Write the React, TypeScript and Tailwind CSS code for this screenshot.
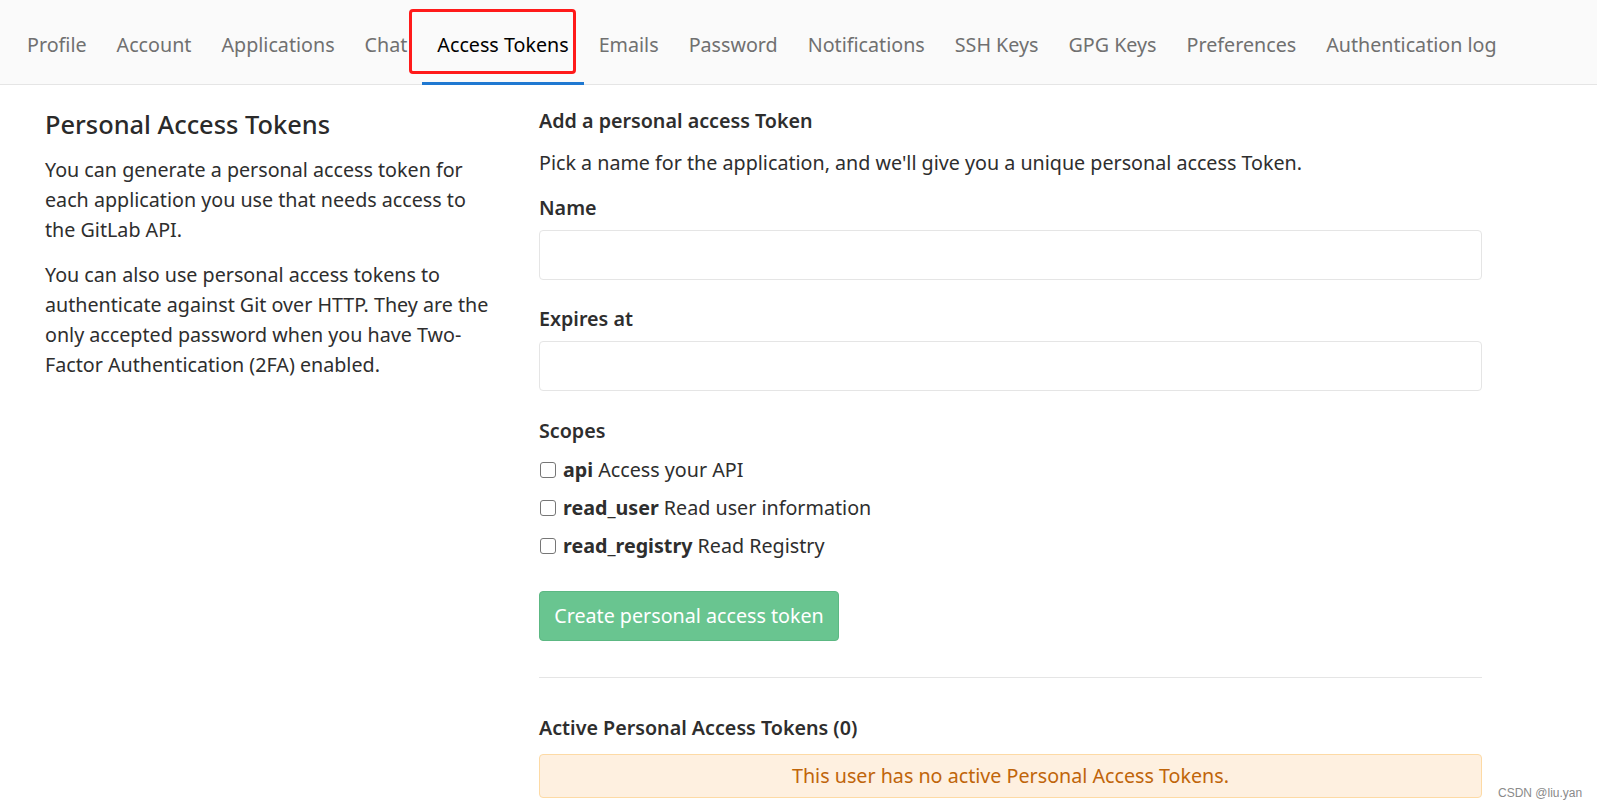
import React from "react";

const tabs = [
  "Profile",
  "Account",
  "Applications",
  "Chat",
  "Access Tokens",
  "Emails",
  "Password",
  "Notifications",
  "SSH Keys",
  "GPG Keys",
  "Preferences",
  "Authentication log",
];

function Checkbox() {
  return (
    <span className="ml-[1px] mt-[-1px] inline-block h-[16px] w-[16px] shrink-0 rounded-[3px] border-[1.5px] border-[#767676] bg-white" />
  );
}

export default function App() {
  return (
    <div
      className="min-h-[810px] bg-white text-[#2e2e2e]"
      style={{ fontFamily: '"Noto Sans", "Open Sans", Arial, sans-serif' }}
    >
      <nav className="flex h-[85px] items-stretch border-b border-[#e5e5e5] bg-[#fafafa] pl-[12px]">
        {tabs.map((t) => {
          const active = t === "Access Tokens";
          return (
            <div
              key={t}
              className={
                "relative flex items-center px-[15px] pt-[5px] text-[19.7px] " +
                (active ? "text-black" : "text-[#707070]")
              }
            >
              <span>{t}</span>
              {active && (
                <>
                  <span className="absolute bottom-[-1px] left-0 right-0 h-[3px] bg-[#1f78d1]" />
                  <span className="absolute left-[-13px] right-[8px] top-[9px] h-[65px] rounded-[4px] border-[3px] border-[#ff1a1a]" />
                </>
              )}
            </div>
          );
        })}
      </nav>

      <div className="flex pt-[24px]">
        <div className="ml-[45px] w-[448px] shrink-0">
          <h4 className="text-[25.4px] font-medium leading-[31px] text-[#2a2a2a]">
            Personal Access Tokens
          </h4>
          <p className="mt-[15px] text-[19.7px] leading-[30px]">
            You can generate a personal access token for each application you use that needs access to the GitLab API.
          </p>
          <p className="mt-[15px] text-[19.7px] leading-[30px]">
            You can also use personal access tokens to authenticate against Git over HTTP. They are the only accepted password when you have Two-Factor Authentication (2FA) enabled.
          </p>
        </div>

        <div className="ml-[46px] w-[943px] shrink-0 text-[19.7px] leading-[30px]">
          <h5 className="-mt-[3px] font-semibold">Add a personal access Token</h5>
          <p className="mt-[12px]">
            Pick a name for the application, and we'll give you a unique personal access Token.
          </p>
          <div className="mt-[15px] font-semibold">Name</div>
          <div className="mt-[7px] h-[50px] rounded-[4px] border border-[#e5e5e5] bg-white" />
          <div className="mt-[24px] font-semibold">Expires at</div>
          <div className="mt-[7px] h-[50px] rounded-[4px] border border-[#e5e5e5] bg-white" />
          <div className="mt-[25px] font-semibold">Scopes</div>
          <div className="mt-[9px] flex flex-col gap-[8px]">
            {[
              ["api", "Access your API"],
              ["read_user", "Read user information"],
              ["read_registry", "Read Registry"],
            ].map(([k, d]) => (
              <label key={k} className="flex items-center gap-[7px]">
                <Checkbox />
                <span>
                  <b className="font-bold">{k}</b> {d}
                </span>
              </label>
            ))}
          </div>
          <button className="mt-[30px] h-[50px] w-[300px] rounded-[4px] border border-[#5cb883] bg-[#69c590] text-white">
            Create personal access token
          </button>
          <hr className="mt-[36px] border-0 border-t border-[#e5e5e5]" />
          <h5 className="mt-[35px] font-semibold">Active Personal Access Tokens (0)</h5>
          <div className="mt-[11px] flex h-[44px] items-center justify-center rounded-[4px] border border-[#fddaa5] bg-[#fef0e0] text-[#c0650a]">
            This user has no active Personal Access Tokens.
          </div>
        </div>
        <div className="relative flex-1">
          <span
            className="absolute bottom-[-2px] left-[16px] whitespace-nowrap text-[12px] leading-[14px] text-[#8a8a8a]"
            style={{ fontFamily: '"Liberation Sans", Arial, sans-serif' }}
          >
            CSDN @liu.yan
          </span>
        </div>
      </div>
    </div>
  );
}
